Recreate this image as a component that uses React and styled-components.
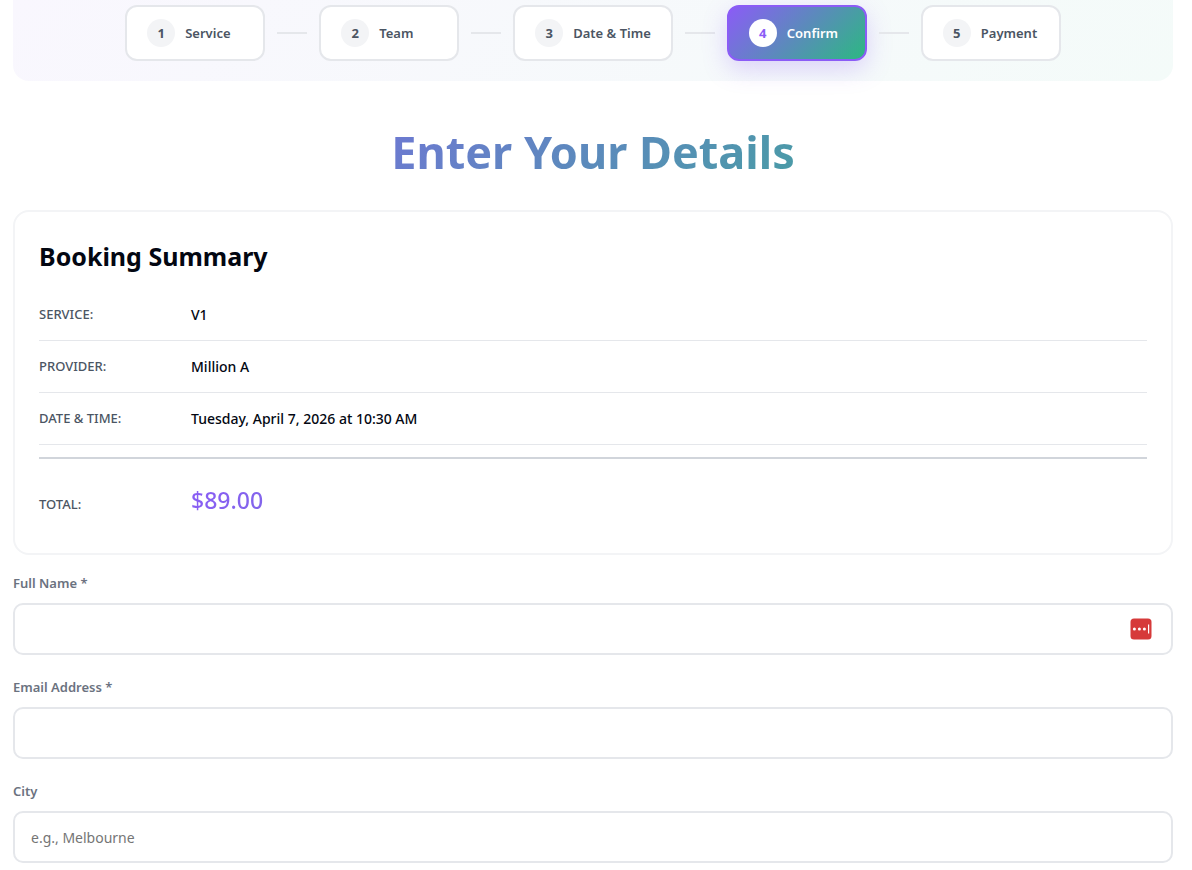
import React, { useState } from 'react';
import styled, { createGlobalStyle } from 'styled-components';

const steps = ['Service', 'Team', 'Date & Time', 'Confirm', 'Payment'];

const summary = [
    { label: 'Service:', value: 'V1' },
    { label: 'Provider:', value: 'Million A' },
    { label: 'Date & Time:', value: 'Tuesday, April 7, 2026 at 10:30 AM' },
];

const fields = [
    { id: 'fullName', label: 'Full Name *', type: 'text', placeholder: '', manager: true },
    { id: 'email', label: 'Email Address *', type: 'email', placeholder: '' },
    { id: 'city', label: 'City', type: 'text', placeholder: 'e.g., Melbourne' },
];

const PasswordManagerIcon = () => (
    <svg width="22" height="22" viewBox="0 0 22 22" aria-hidden="true">
        <rect x="0.5" y="0.5" width="21" height="21" rx="3.5" fill="#d63a3a" />
        <circle cx="4.4" cy="11" r="1.5" fill="#fff" />
        <circle cx="9.4" cy="11" r="1.5" fill="#fff" />
        <circle cx="14.4" cy="11" r="1.5" fill="#fff" />
        <rect x="18" y="6.5" width="1.2" height="9" fill="#fff" />
    </svg>
);

const App = () => {
    const [current, setCurrent] = useState(3);
    const [values, setValues] = useState({ fullName: '', email: '', city: '' });

    const handleChange = (e) => {
        setValues({ ...values, [e.target.name]: e.target.value });
    };

    return (
        <>
            <GlobalStyle />
            <Styled.Page>
                <Styled.Steps aria-label="Booking steps">
                    {steps.map((title, i) => (
                        <React.Fragment key={title}>
                            {i > 0 && <Styled.Connector />}
                            <Styled.Step type="button" $active={i === current} onClick={() => setCurrent(i)}>
                                <Styled.StepNumber $active={i === current}>{i + 1}</Styled.StepNumber>
                                <span>{title}</span>
                            </Styled.Step>
                        </React.Fragment>
                    ))}
                </Styled.Steps>

                <Styled.Title>Enter Your Details</Styled.Title>

                <Styled.Card>
                    <Styled.CardTitle>Booking Summary</Styled.CardTitle>
                    <Styled.List>
                        {summary.map(({ label, value }) => (
                            <Styled.Row key={label}>
                                <Styled.Term>{label}</Styled.Term>
                                <Styled.Value>{value}</Styled.Value>
                            </Styled.Row>
                        ))}
                        <Styled.TotalRow>
                            <Styled.Term>Total:</Styled.Term>
                            <Styled.Price>$89.00</Styled.Price>
                        </Styled.TotalRow>
                    </Styled.List>
                </Styled.Card>

                <Styled.Form>
                    {fields.map(({ id, label, type, placeholder, manager }) => (
                        <Styled.Field key={id}>
                            <Styled.Label htmlFor={id}>{label}</Styled.Label>
                            <Styled.InputBox>
                                <Styled.Input
                                    id={id}
                                    name={id}
                                    type={type}
                                    placeholder={placeholder}
                                    value={values[id]}
                                    onChange={handleChange} />
                                {manager && (
                                    <Styled.FillButton type="button" aria-label="Fill from password manager">
                                        <PasswordManagerIcon />
                                    </Styled.FillButton>
                                )}
                            </Styled.InputBox>
                        </Styled.Field>
                    ))}
                </Styled.Form>
            </Styled.Page>
        </>
    );
};

const GlobalStyle = createGlobalStyle`
    *, *::before, *::after {
        box-sizing: border-box;
    }

    body {
        margin: 0;
        background-color: #fff;
        color: #030712;
        font-family: "Noto Sans", "Open Sans", sans-serif;
    }

    button, input {
        font-family: inherit;
    }
`;

const Styled = {
    Page: styled.main`
        padding: 0 19px 0 13px;
    `,

    Steps: styled.nav`
        display: flex;
        justify-content: center;
        align-items: center;
        gap: 12px;
        padding: 5px 20px 20px;
        border-radius: 0 0 16px 16px;
        background: linear-gradient(135deg, #f9f7fe, #f4fbf9);
    `,

    Step: styled.button`
        display: flex;
        align-items: center;
        gap: 10px;
        min-width: 140px;
        height: 56px;
        padding: 0 20px;
        border: 2px solid #e5e7eb;
        border-radius: 12px;
        background: #fff;
        color: #4b5563;
        font-size: 13px;
        font-weight: 600;
        white-space: nowrap;
        cursor: pointer;
        ${(props) => props.$active && `
            border-color: #8b5cf6;
            background: linear-gradient(135deg, #8b5cf6, #2cb882);
            color: #fff;
            box-shadow: 0 8px 24px rgba(139, 92, 246, 0.25);
        `}
    `,

    StepNumber: styled.span`
        display: flex;
        align-items: center;
        justify-content: center;
        width: 28px;
        height: 28px;
        border-radius: 50%;
        background-color: ${(props) => (props.$active ? '#fff' : '#f3f4f6')};
        color: ${(props) => (props.$active ? '#8b5cf6' : '#4b5563')};
        font-weight: 700;
    `,

    Connector: styled.span`
        width: 30px;
        height: 2px;
        background-color: #e5e7eb;
    `,

    Title: styled.h1`
        margin: 39px 0 26px;
        background: linear-gradient(135deg, #8b5cf6, #2cb882);
        background-clip: text;
        -webkit-background-clip: text;
        color: transparent;
        font-size: 45px;
        line-height: 64px;
        font-weight: 700;
        text-align: center;
    `,

    Card: styled.section`
        padding: 24px;
        border: 2px solid #f3f4f6;
        border-radius: 16px;
    `,

    CardTitle: styled.h2`
        margin: 2px 0 19px;
        font-size: 25px;
        line-height: 36px;
        font-weight: 700;
    `,

    List: styled.dl`
        margin: 0;
    `,

    Row: styled.div`
        display: grid;
        grid-template-columns: 140px 1fr;
        align-items: center;
        gap: 12px;
        padding: 12px 0;
        border-bottom: 1px solid #e5e7eb;
        line-height: 27px;

        &:first-child {
            padding-top: 8px;
        }
    `,

    TotalRow: styled.div`
        display: grid;
        grid-template-columns: 140px 1fr;
        align-items: baseline;
        gap: 12px;
        margin-top: 12px;
        padding: 24px 0 8px;
        border-top: 2px solid #d1d5db;
        line-height: 34px;
    `,

    Term: styled.dt`
        color: #4b5563;
        font-size: 13px;
        font-weight: 500;
        text-transform: uppercase;
    `,

    Value: styled.dd`
        margin: 0;
        font-size: 14px;
        font-weight: 500;
    `,

    Price: styled.dd`
        margin: 0;
        background: linear-gradient(135deg, #8b5cf6, #2cb882);
        background-clip: text;
        -webkit-background-clip: text;
        color: transparent;
        font-size: 23px;
        font-weight: 500;
    `,

    Form: styled.form`
        display: flex;
        flex-direction: column;
        gap: 22px;
        padding: 18px 0 8px;
    `,

    Field: styled.div`
        display: flex;
        flex-direction: column;
        gap: 10px;
    `,

    Label: styled.label`
        color: #6b7280;
        font-size: 13px;
        line-height: 20px;
        font-weight: 600;
    `,

    InputBox: styled.div`
        display: flex;
        align-items: center;
        height: 52px;
        border: 2px solid #e5e7eb;
        border-radius: 10px;
        background-color: #fff;

        &:focus-within {
            border-color: #8b5cf6;
        }
    `,

    Input: styled.input`
        flex: 1;
        min-width: 0;
        height: 100%;
        padding: 0 16px;
        border: 0;
        outline: none;
        background: transparent;
        color: #030712;
        font-size: 14px;

        &::placeholder {
            color: #757575;
        }
    `,

    FillButton: styled.button`
        display: flex;
        margin-right: 19px;
        padding: 0;
        border: 0;
        background: none;
        cursor: pointer;
    `,
};

export default App;
